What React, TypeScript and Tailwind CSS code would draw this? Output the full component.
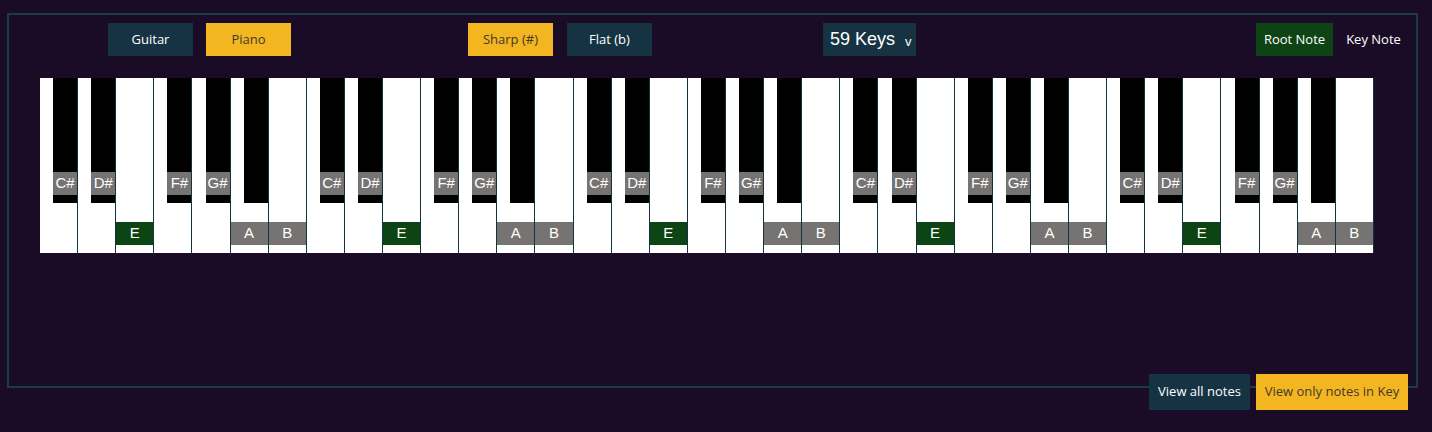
import React from 'react';

type WhiteKey = {
  note: string;
  sharp?: string;
  label?: 'root' | 'key';
  sharpLabel?: boolean;
};

const OCTAVE: WhiteKey[] = [
  { note: 'C', sharp: 'C#', sharpLabel: true },
  { note: 'D', sharp: 'D#', sharpLabel: true },
  { note: 'E', label: 'root' },
  { note: 'F', sharp: 'F#', sharpLabel: true },
  { note: 'G', sharp: 'G#', sharpLabel: true },
  { note: 'A', sharp: 'A#', label: 'key' },
  { note: 'B', label: 'key' },
];

const KEYS: WhiteKey[] = Array.from({ length: 5 }).flatMap(() => OCTAVE);

const btn = 'h-[33px] flex items-center justify-center text-[13px]';

export default function App() {
  return (
    <div
      className="min-h-[432px] bg-[#1a0c26] pt-[13px]"
      style={{ fontFamily: '"Open Sans", "Liberation Sans", sans-serif' }}
    >
      <div className="ml-[7px] w-[1411px] h-[375px] border-2 border-[#1c3c44]">
        {/* top controls */}
        <div className="flex items-center pt-[8px] pl-[99px] pr-[8px]">
          <button className={`${btn} w-[85px] bg-[#163344] text-white`}>Guitar</button>
          <button className={`${btn} w-[85px] ml-[13px] bg-[#f3b520] text-[#3f3a2c]`}>Piano</button>

          <button className={`${btn} w-[85px] ml-[177px] bg-[#f3b520] text-[#3f3a2c]`}>Sharp (#)</button>
          <button className={`${btn} w-[85px] ml-[14px] bg-[#163344] text-white`}>Flat (b)</button>

          <button
            className="h-[33px] w-[93px] ml-[171px] bg-[#163344] text-white flex items-center pl-[7px]"
            style={{ fontFamily: '"Liberation Sans", Arial, sans-serif' }}
          >
            <span className="text-[18px]">59 Keys</span>
            <span className="text-[13px] ml-[10px] mt-[5px]">v</span>
          </button>

          <div className="ml-auto flex gap-[6px]">
            <button className={`${btn} w-[77px] bg-[#0e4414] text-white`}>Root Note</button>
            <button className={`${btn} w-[69px] text-white`}>Key Note</button>
          </div>
        </div>

        {/* keyboard */}
        <div
          className="flex w-[1334px] h-[175px] ml-[31px] mt-[22px]"
          style={{ fontFamily: '"Liberation Sans", Arial, sans-serif' }}
        >
          {KEYS.map((k, i) => (
            <div key={i} className="relative flex-1 h-full bg-white border-r border-[#14323f]">
              {k.sharp && (
                <div className="absolute top-0 right-0 z-10 w-[24px] h-[125px] bg-black">
                  {k.sharpLabel && (
                    <div className="absolute left-0 right-0 bottom-[8px] h-[23px] bg-[#767472] text-white text-[15px] flex items-center justify-center">
                      {k.sharp}
                    </div>
                  )}
                </div>
              )}
              {k.label && (
                <div
                  className={`absolute left-0 right-0 bottom-[8px] h-[23px] text-white text-[15px] flex items-center justify-center ${
                    k.label === 'root' ? 'bg-[#0d4413]' : 'bg-[#767472]'
                  }`}
                >
                  {k.note}
                </div>
              )}
            </div>
          ))}
        </div>
      </div>

      {/* view toggles */}
      <div className="relative ml-[7px] w-[1411px] -mt-[14px] pr-[10px] flex justify-end gap-[6px]">
        <button className="h-[36px] w-[101px] bg-[#163344] text-white text-[13px]">View all notes</button>
        <button className="h-[36px] w-[152px] bg-[#f3b520] text-[#3f3a2c] text-[13px]">View only notes in Key</button>
      </div>
    </div>
  );
}
